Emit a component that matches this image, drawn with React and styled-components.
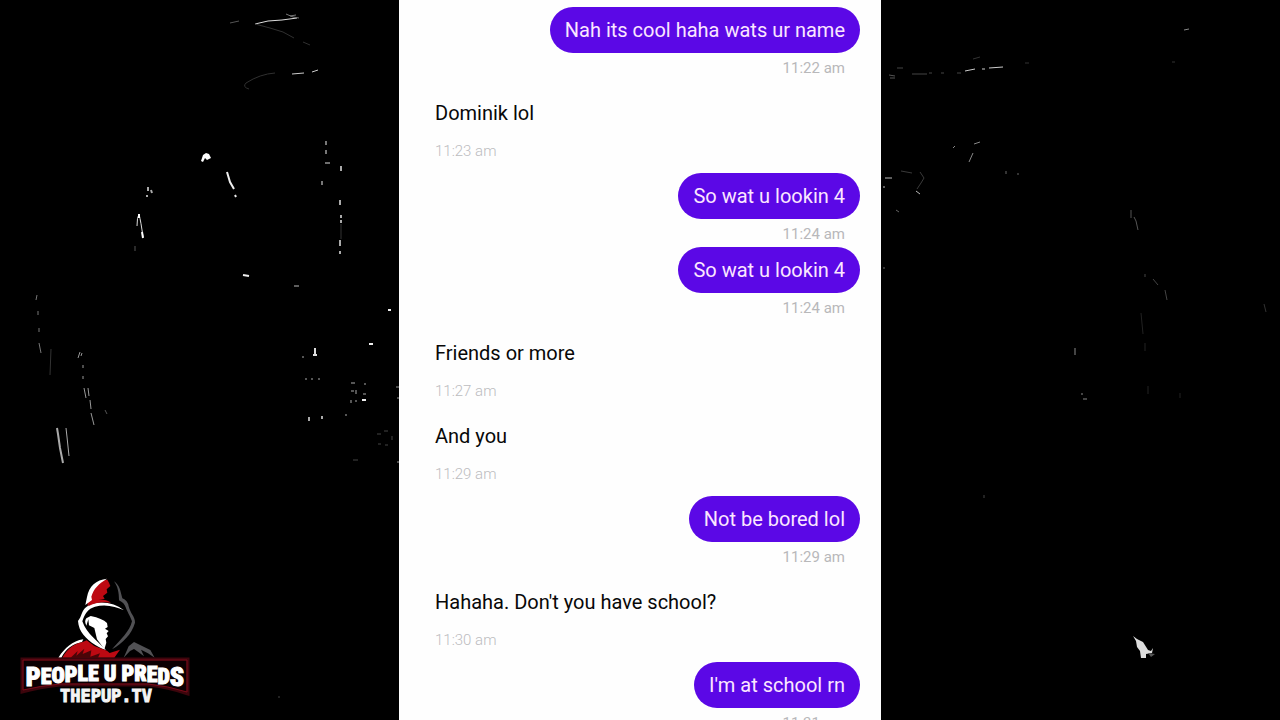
import React from "react";
import styled, { createGlobalStyle } from "styled-components";

const GlobalStyle = createGlobalStyle`
  *, *::before, *::after { box-sizing: border-box; }
  body { margin: 0; background: #000; font-family: Roboto, "Liberation Sans", sans-serif; }
`;

const Stage = styled.main`
  position: relative;
  display: grid;
  grid-template-columns: 1fr minmax(0, 482px) 1fr;
  height: 100vh;
  overflow: hidden;
  background: #000;
`;

const Backdrop = styled.svg`
  position: absolute;
  inset: 0;
  width: 100%;
  height: 100%;
`;

const Chat = styled.ol`
  position: relative;
  grid-column: 2;
  display: flex;
  flex-direction: column;
  margin: 0;
  padding: 7px 21px 0;
  list-style: none;
  background: #fefefe;
  overflow: hidden;
`;

const Message = styled.li`
  display: flex;
  flex: none;
  flex-direction: column;
  align-items: ${(p) => (p.$sent ? "flex-end" : "flex-start")};
  padding-top: ${(p) => (p.$gap ? "9px" : "0")};
`;

const Bubble = styled.p`
  margin: 0;
  padding: 11px 15px;
  border-radius: 23px;
  font-size: 20px;
  line-height: 24px;
  color: ${(p) => (p.$sent ? "#fbe6ff" : "#080808")};
  background: ${(p) => (p.$sent ? "#5b08e6" : "transparent")};
`;

const Time = styled.time`
  padding: 5px 15px 3px;
  font-size: 15px;
  line-height: 20px;
  font-weight: ${(p) => (p.$sent ? 400 : 300)};
  color: ${(p) => (p.$sent ? "#b8b8ba" : "#bcbcbe")};
`;

const Brand = styled.svg`
  position: absolute;
  left: 10px;
  bottom: 10px;
  width: 190px;
  height: 140px;
`;

const BrandName = styled.text`
  font-family: "Roboto Condensed", "Liberation Sans Narrow", Roboto, sans-serif;
  font-weight: 900;
  font-size: 22px;
  fill: #fff;
  stroke: #fff;
  stroke-width: 1px;
`;

const EndLetter = styled.tspan`
  font-size: 26px;
`;

const BrandSite = styled.text`
  font-family: "DejaVu Sans Mono", monospace;
  font-weight: 700;
  font-size: 17px;
  fill: #f4f4f4;
`;

const messages = [
  { text: "Nah its cool haha wats ur name", time: "11:22 am", sent: true },
  { text: "Dominik lol", time: "11:23 am" },
  { text: "So wat u lookin 4", time: "11:24 am", sent: true },
  { text: "So wat u lookin 4", time: "11:24 am", sent: true },
  { text: "Friends or more", time: "11:27 am" },
  { text: "And you", time: "11:29 am" },
  { text: "Not be bored lol", time: "11:29 am", sent: true },
  { text: "Hahaha. Don't you have school?", time: "11:30 am" },
  { text: "I'm at school rn", time: "11:31 am", sent: true },
];

/* Marks of light: path, colour, stroke width */
const streaks = [
  ["M255 24L268 21L282 20L297 18", "#ddd", 1],
  ["M255 24L270 28L283 32L294 38M303 42L310 45", "#303030", 1],
  ["M286 14L293 17L299 18M290 16L296 15", "#777", 1],
  ["M230 23L239 21", "#555", 1],
  ["M249 89Q242 87 246 83Q260 74 275 73", "#303030", 1],
  ["M292 74L304 73M312 72L318 70", "#ccc", 1],
  ["M227 172L230 182L234 189M235 195L236 197", "#eee", 2],
  ["M148 187V191M151 190L152 193M147 195V197", "#aaa", 2],
  ["M137 226Q137 217 139 214Q141 222 143 237", "#ddd", 1],
  ["M139 214V218M142 232L143 238", "#fff", 2],
  ["M135 246V251", "#555", 1],
  ["M326 141V145M326 150V154M322 181V185", "#777", 2],
  ["M325 163H330", "#ddd", 1],
  ["M341 166V171M340 200V205M341 215V218M341 220V223M340 240V246M340 251V254", "#aaa", 2],
  ["M341 224V239", "#333", 1],
  ["M243 275L249 276", "#eee", 2],
  ["M294 286H299", "#bbb", 1],
  ["M37 295L36 300M38 311V315M39 328V332M39 343L41 353", "#777", 1],
  ["M51 349L50 375", "#333", 1],
  ["M80 352L78 358M82 353L81 356M83 365V368M83 376V379M84 388L86 398M88 388L89 396M90 400L91 409M91 413L94 425", "#999", 1],
  ["M57 428L58 434L60 448L63 463", "#aaa", 2],
  ["M66 428L67 437L69 456", "#aaa", 1],
  ["M105 410L107 414", "#555", 1],
  ["M315 348V356M313 355H317", "#ddd", 2],
  ["M303 356V358M305 379H307M311 379H313M318 379H320", "#aaa", 1],
  ["M309 417V421M322 416V419", "#aaa", 2],
  ["M351 383H355M365 383V385M351 391H354M356 390V394M363 394H366M351 400V403M356 400V402M345 415H347", "#aaa", 1],
  ["M362 400H366M388 310H391M369 344H373", "#eee", 2],
  ["M377 434H381M384 431H388M392 436V440M378 444H381M385 445H388M353 460H358", "#444", 1],
  ["M396 387H399M398 397V399M397 462H399", "#999", 1],
  ["M889 75L895 76M890 78H895", "#555", 1],
  ["M897 68H903M912 74H927M929 73H932M941 73H944M957 73H961", "#444", 1],
  ["M965 71L975 69M982 69H985M989 68L1003 67", "#ccc", 1],
  ["M973 59L980 57M1025 63H1029M1172 62H1175", "#333", 1],
  ["M1184 30L1189 29", "#888", 1],
  ["M953 148L955 146M974 144L980 142M973 153L969 162", "#888", 1],
  ["M885 178H892M883 187H885M916 191L920 194", "#bbb", 1],
  ["M901 171L912 173M920 172L924 178L921 183L917 189", "#3a3a3a", 1],
  ["M896 210L899 212M883 268H885M1006 171V174M1018 173V175", "#666", 1],
  ["M1131 210V218M1134 217L1136 221L1138 230", "#555", 1],
  ["M1145 274V277M1153 279L1158 285M1165 290L1167 300", "#444", 1],
  ["M1141 313L1143 334M1145 343V351M1148 386V394M1180 393V398", "#222", 1],
  ["M1264 304L1266 312", "#333", 1],
  ["M1075 348V355M1083 399H1087M1082 393V395", "#888", 1],
  ["M984 495V498M278 697H280", "#444", 1],
];

function NightScene() {
  return (
    <Backdrop viewBox="0 0 1280 720" preserveAspectRatio="xMidYMid slice" aria-hidden="true">
      {streaks.map(([d, stroke, width]) => (
        <path key={d} d={d} fill="none" stroke={stroke} strokeWidth={width} />
      ))}
      <path d="M201 161L203 155L206 153L209 154L211 158L207 160L205 158L203 162Z" fill="#fff" />
      <path d="M1133 636L1137 639L1143 642L1148 650L1151 651L1153 648L1152 653L1146 654L1146 658H1141L1140 651L1137 647L1136 641Z" fill="#ddd" />
      <path d="M1148 653L1155 654L1151 657Z" fill="#555" />
    </Backdrop>
  );
}

function HoodedFigure() {
  return (
    <svg width="190" height="140" viewBox="0 0 570 420">
      <path d="M292 29C260 31 242 53 237 82L232 108L254 92L284 86L279 78L292 68L290 58L301 48L297 38Z" fill="#bd0912" />
      <path d="M291 26C258 29 237 49 231 81L226 105L246 90L244 80C251 56 266 41 291 26Z" fill="#fff" />
      <path d="M312 34C329 46 331 62 337 85Q353 91 356 109C361 131 376 141 375 158C365 193 338 219 306 238C333 207 359 184 366 154C359 135 352 126 347 112Q343 99 327 91C327 67 323 49 312 34Z" fill="#515154" />
      <path d="M342 121C313 96 260 88 230 110C213 122 217 137 204 153C206 185 228 207 256 225Q275 237 288 240C269 219 229 191 217 154C224 131 234 116 255 110C285 101 318 109 342 121Z" fill="#fff" />
      <path d="M248 91Q282 83 303 98Q262 93 235 109Z" fill="#bd0912" />
      <path d="M229 145L242 138Q277 145 291 159L293 171L285 176L296 183L290 190L294 199L287 207L289 218L283 238L270 220L261 208L253 174L237 166L235 148L229 167Q222 153 229 145Z" fill="#fff" />
      <path d="M145 263C164 234 187 213 220 208L216 216C187 222 168 236 154 263Z" fill="#fff" />
      <path d="M157 263C173 233 196 220 218 216L230 211L253 228L291 242L299 249L330 239L313 263Z" fill="#bd0912" />
      <path d="M182 263L203 243L199 257L223 236L218 252L244 241L241 260L270 250L264 263Z" fill="#4a0508" />
      <path d="M341 263L356 229L372 216L401 230L421 240L434 263L414 250L393 239L402 259L386 247L372 237L360 243Z" fill="#515154" />
    </svg>
  );
}

function BrandLogo() {
  return (
    <Brand viewBox="0 0 190 140" role="img" aria-label="People U Preds, thepup.tv">
      <HoodedFigure />
      <path d="M12 89H178V124Q158 117 138 115H50Q30 117 12 122Z" fill="#0c0002" stroke="#3c050c" strokeWidth="3" />
      <path d="M13 90H177V122Q158 116 138 114H50Q30 116 13 120Z" fill="none" stroke="#7c0a18" />
      <BrandName x="95" y="111" textAnchor="middle">
        <EndLetter dy="5">P</EndLetter>
        <tspan dy="-2">E</tspan>
        <tspan dy="-1">O</tspan>
        <tspan dy="-1">P</tspan>
        <tspan dy="-1">LE U PR</tspan>
        <tspan dy="1">E</tspan>
        <tspan dy="2">D</tspan>
        <EndLetter dy="2">S</EndLetter>
      </BrandName>
      <BrandSite x="96" y="132" textAnchor="middle" stroke="#f4f4f4">THEPUP.TV</BrandSite>
    </Brand>
  );
}

export default function App() {
  return (
    <>
      <GlobalStyle />
      <Stage>
        <NightScene />
        <Chat>
          {messages.map((m, i) => (
            <Message key={i} $sent={m.sent} $gap={i > 0 && !(m.sent && messages[i - 1].sent)}>
              <Bubble $sent={m.sent}>{m.text}</Bubble>
              <Time $sent={m.sent}>{m.time}</Time>
            </Message>
          ))}
        </Chat>
        <BrandLogo />
      </Stage>
    </>
  );
}
